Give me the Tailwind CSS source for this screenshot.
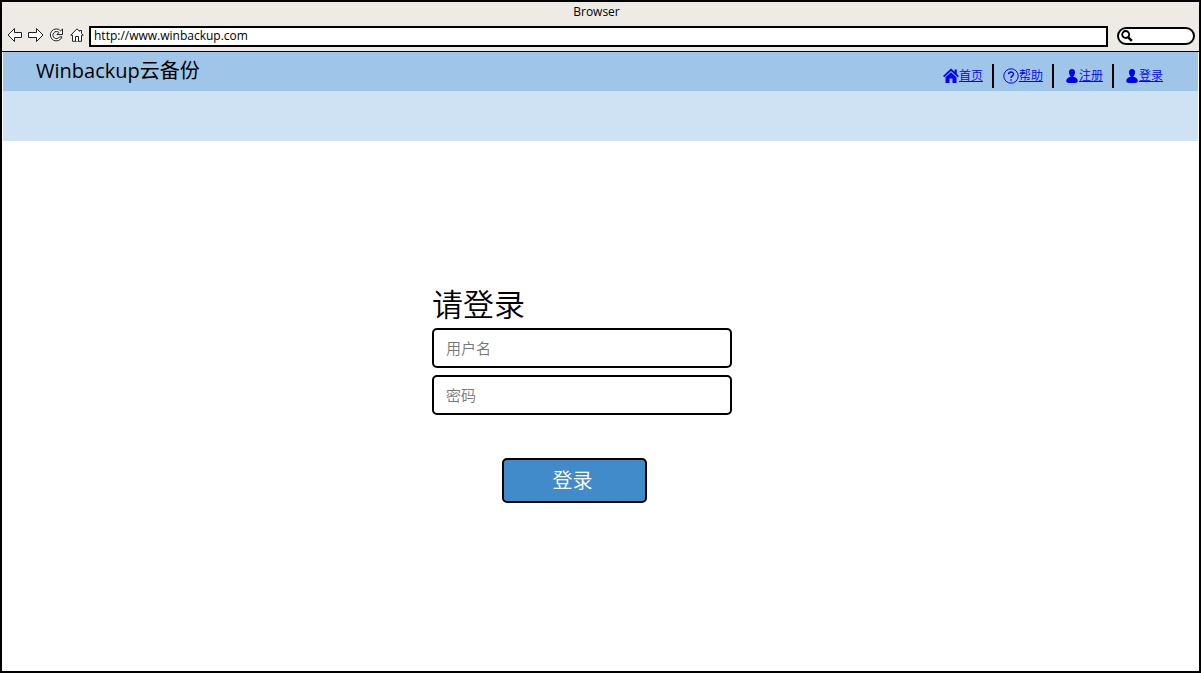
<!DOCTYPE html>
<html lang="zh-CN">
<head>
<meta charset="utf-8">
<title>Winbackup云备份</title>
<script src="https://cdn.jsdelivr.net/npm/@tailwindcss/browser@4"></script>
</head>
<body class="flex min-h-screen flex-col border-2 border-black bg-white font-['Open_Sans','Noto_Sans_CJK_SC',sans-serif] text-black">
  <div class="border-b border-black bg-[#eeebe6]">
    <div class="pt-px pr-2 text-center text-xs leading-[18px]">Browser</div>
    <div class="flex h-[30px] items-center pr-1 pl-[5px]">
      <div class="flex items-center gap-[5px] pb-[2px]">
        <button type="button" aria-label="后退" class="block">
          <svg class="block" width="16" height="16" viewBox="0 0 16 16" fill="#fff" stroke="#222"><path d="M1 8 7.500 1.500V5.500H14.500V10.500H7.500V14.500Z"/></svg>
        </button>
        <button type="button" aria-label="前进" class="block">
          <svg class="block" width="16" height="16" viewBox="0 0 16 16" fill="#fff" stroke="#222"><path d="M15 8 8.500 1.500V5.500H.5V10.500H8.500V14.500Z"/></svg>
        </button>
        <button type="button" aria-label="刷新" class="block">
          <svg class="block" width="15" height="16" viewBox="0 0 15 16" fill="#fff" stroke="#222" stroke-linejoin="round"><path d="M13.500 2V7.500H8L10 5.500A3.600 3.600 0 1 0 10.600 9.900H13A6 6 0 1 1 11.700 3.800Z"/></svg>
        </button>
        <button type="button" aria-label="主页" class="block">
          <svg class="block" width="16" height="16" viewBox="0 0 16 16" fill="#fff" stroke="#222"><path d="M8 1.800 1.800 8.200H3.500V14.300H12.500V8.200H14.200L12.500 6.400V3.500H10.500V4.400Z"/><path d="M6.500 14.300V9.500H9.500V14.300"/></svg>
        </button>
      </div>
      <input type="text" aria-label="地址" value="http://www.winbackup.com" class="ml-1 h-[21px] min-w-0 flex-1 border-2 border-black bg-white px-[3px] pb-[2px] text-xs outline-none">
      <label class="ml-[9px] flex h-[18px] w-[78px] items-center rounded-full border-2 border-black bg-white pl-[2px]">
        <svg class="shrink-0" width="12" height="12" viewBox="0 0 12 12" fill="none" stroke="#000"><circle cx="4.700" cy="4.500" r="3.500" stroke-width="1.800"/><path d="m7.300 7.300 3.500 3.500" stroke-width="2.600"/></svg>
        <input type="search" aria-label="搜索" class="w-full min-w-0 text-xs outline-none">
      </label>
    </div>
  </div>

  <header class="mx-px flex h-[39px] items-center justify-between bg-[#9fc5e8] pr-[35px] pl-[33px]">
    <h1 class="pb-[2px] text-xl leading-9">Winbackup云备份</h1>
    <nav class="mt-2 flex text-xs leading-4 font-[350] text-[#0000ff]">
      <a href="#home" class="flex h-6 items-center border-r-2 border-black pr-[9px]">
        <svg width="16" height="16" viewBox="0 0 16 16" fill="currentColor"><path d="M8 .5 0 8l1.200 1.200L8 2.900l6.800 6.300L16 8l-2.200-2.100V1.500h-2.200v2.300z"/><path d="M8 4.200 2.500 9.200V15h4v-4.500h3V15h4V9.200z"/></svg>
        <span class="underline">首页</span>
      </a>
      <a href="#help" class="flex h-6 items-center border-r-2 border-black pr-[9px] pl-[9px]">
        <svg width="16" height="16" viewBox="0 0 16 16" fill="none" stroke="currentColor"><circle cx="8" cy="8" r="7.200"/><path stroke-width="1.400" d="M5.600 6.200C5.600 3.200 10.500 3.200 10.500 6.100 10.500 7.900 8 7.900 8 10M8 11.200V12.700"/></svg>
        <span class="underline">帮助</span>
      </a>
      <a href="#register" class="flex h-6 items-center gap-px border-r-2 border-black pr-[9px] pl-3">
        <svg width="12" height="16" viewBox="0 0 12 16" fill="currentColor"><path d="M6 1C3.900 1 2.900 2.500 3 4.400 3.100 6.100 3.700 7.500 4.700 8.200V8.800C2 9.300.2 10.600.2 13.200.2 14.500 2 15 6 15s5.800-.5 5.800-1.800C11.800 10.600 10 9.300 7.300 8.800V8.200C8.300 7.500 8.900 6.100 9 4.400 9.100 2.500 8.100 1 6 1Z"/></svg>
        <span class="underline">注册</span>
      </a>
      <a href="#login" class="flex h-6 items-center gap-px pl-3">
        <svg width="12" height="16" viewBox="0 0 12 16" fill="currentColor"><path d="M6 1C3.900 1 2.900 2.500 3 4.400 3.100 6.100 3.700 7.500 4.700 8.200V8.800C2 9.300.2 10.600.2 13.200.2 14.500 2 15 6 15s5.800-.5 5.800-1.800C11.800 10.600 10 9.300 7.300 8.800V8.200C8.300 7.500 8.900 6.100 9 4.400 9.100 2.500 8.100 1 6 1Z"/></svg>
        <span class="underline">登录</span>
      </a>
    </nav>
  </header>
  <div class="mx-px h-[50px] bg-[#cfe2f3]"></div>

  <main class="flex flex-1 justify-center pt-[141px] pr-[37px]">
    <form class="w-[300px]">
      <h2 class="pb-[2px] text-[31px] leading-11 font-[350]">请登录</h2>
      <div class="flex flex-col gap-[7px]">
        <input type="text" aria-label="用户名" placeholder="用户名" class="h-10 w-full rounded-[5px] border-2 border-black bg-white px-3 text-[15px] font-[350] outline-none placeholder:text-[#777]">
        <input type="password" aria-label="密码" placeholder="密码" class="h-10 w-full rounded-[5px] border-2 border-black bg-white px-3 text-[15px] font-[350] outline-none placeholder:text-[#777]">
      </div>
      <button type="submit" class="mt-[43px] ml-[70px] block h-[45px] w-[145px] rounded-[5px] border-2 border-black bg-[#428bca] pr-1 text-xl font-[350] text-white">登录</button>
    </form>
  </main>
</body>
</html>
